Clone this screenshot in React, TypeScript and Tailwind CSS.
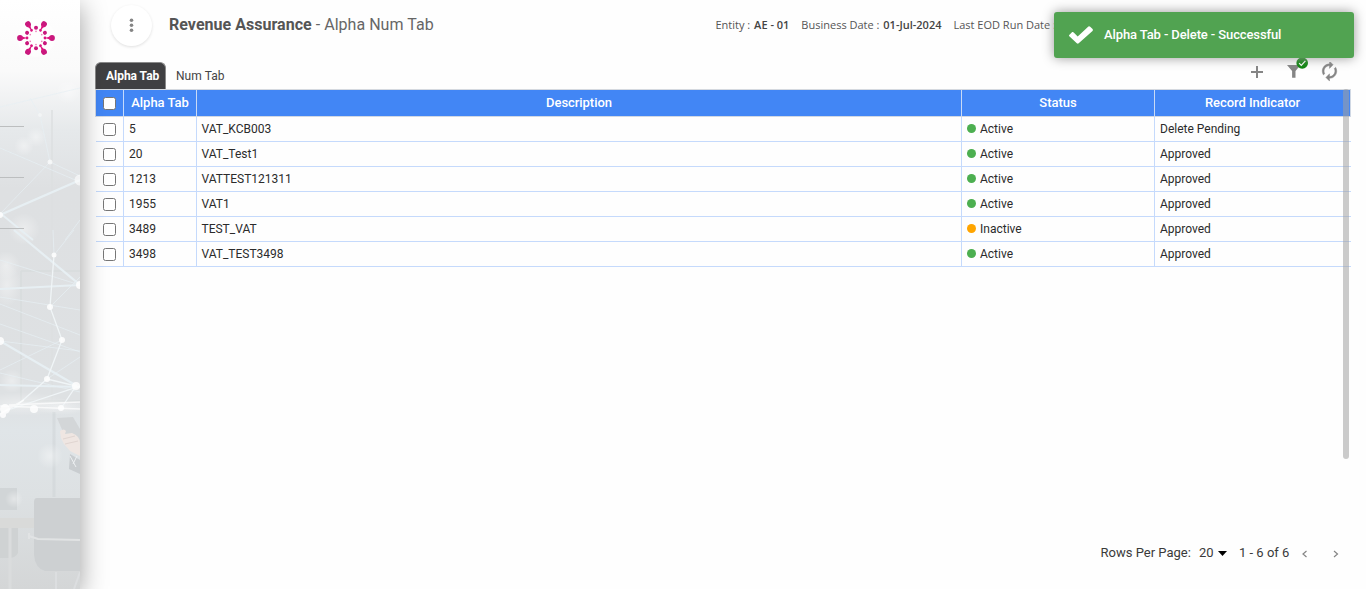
import React from "react";

type Row = { id: string; description: string; status: "Active" | "Inactive"; indicator: string };

const rows: Row[] = [
  { id: "5", description: "VAT_KCB003", status: "Active", indicator: "Delete Pending" },
  { id: "20", description: "VAT_Test1", status: "Active", indicator: "Approved" },
  { id: "1213", description: "VATTEST121311", status: "Active", indicator: "Approved" },
  { id: "1955", description: "VAT1", status: "Active", indicator: "Approved" },
  { id: "3489", description: "TEST_VAT", status: "Inactive", indicator: "Approved" },
  { id: "3498", description: "VAT_TEST3498", status: "Active", indicator: "Approved" },
];

const columns = "grid grid-cols-[28px_73px_765px_193px_195px]";

function Logo() {
  const spokes = [0, 60, 120, 180, 240, 300];
  return (
    <svg className="ml-[16px] mt-[18px] h-10 w-10 shrink-0" viewBox="-20 -20 40 40" fill="#dc1480">
      <circle r="19" fill="#fff" opacity="0.6" />
      {spokes.map((a) => (
        <g key={a} transform={`rotate(${a})`}>
          <circle cx="16" r="2.9" fill="#c9187d" />
          <path d="M14.5 -1.7L10 -0.3V0.3L14.5 1.7Z" />
          <circle cx="9" r="1.4" />
        </g>
      ))}
      {spokes.map((a) => (
        <g key={a} transform={`rotate(${a + 30})`}>
          <circle cx="10.3" r="2" fill="#c9187d" />
          <circle cx="6.6" r="0.8" opacity="0.55" />
        </g>
      ))}
    </svg>
  );
}

function Backdrop() {
  return (
    <svg className="absolute inset-0 h-full w-full" viewBox="0 0 80 589" preserveAspectRatio="none">
      <defs>
        <linearGradient id="base" x1="0" y1="0" x2="0" y2="1">
          <stop offset="0" stopColor="#fff" />
          <stop offset="0.12" stopColor="#fafafa" />
          <stop offset="0.22" stopColor="#e6e9eb" />
          <stop offset="0.32" stopColor="#dee0e2" />
          <stop offset="0.68" stopColor="#dee1e3" />
          <stop offset="0.73" stopColor="#e0e5e8" />
          <stop offset="0.84" stopColor="#dde1e3" />
          <stop offset="1" stopColor="#d4d6d7" />
        </linearGradient>
        <radialGradient id="glow">
          <stop offset="0" stopColor="#fff" stopOpacity="0.4" />
          <stop offset="1" stopColor="#fff" stopOpacity="0" />
        </radialGradient>
      </defs>
      <rect width="80" height="589" fill="url(#base)" />
      <path d="M21 271H80M21 271V401H80" fill="none" stroke="#d8dbdd" strokeWidth="1.5" />
      <path d="M52 110V400" stroke="#dcdfe1" strokeWidth="1.5" />
      <path d="M54 412V497" stroke="#cfd4d7" strokeWidth="3" opacity="0.5" />
      <g fill="url(#glow)">
        <circle cx="68" cy="92" r="12" />
        <circle cx="36" cy="137" r="10" />
        <circle cx="24" cy="146" r="10" />
        <circle cx="6" cy="265" r="14" />
        <ellipse cx="7" cy="285" rx="14" ry="22" />
        <circle cx="24" cy="229" r="16" />
        <circle cx="12" cy="381" r="12" />
        <circle cx="50" cy="456" r="13" />
        <ellipse cx="22" cy="404" rx="48" ry="12" />
        <ellipse cx="62" cy="407" rx="28" ry="8" />
      </g>
      <g stroke="#e7eff3" fill="none">
        <path d="M0 215L80 180M14 230L80 285M0 341L77 386" strokeWidth="2.2" />
        <path d="M0 213L33 240M0 289L80 285M0 385L80 387" strokeWidth="1.8" />
        <path d="M0 297L80 310M0 304L80 335M0 324L80 352M0 370L62 340M0 341L80 351M0 373L80 392M47 379L80 357M50 307L80 277M54 255L74 230M54 255L53 230M0 214L50 162L40 115L30 98M50 162L80 176M65 240L80 220M0 260L80 285M0 107L80 88M0 148L80 182" strokeWidth="0.7" />
        <path d="M54 255L50 307L62 340L47 379L14 408M47 379L76 386L62 407M5 411L80 386" strokeWidth="1.3" stroke="#f0f5f7" />
      </g>
      <path d="M0 406L80 409M0 414L24 400M9 405L80 402" stroke="#fff" strokeWidth="1.6" opacity="0.7" />
      <g fill="#fff" opacity="0.85">
        <circle cx="80" cy="180" r="5.5" opacity="0.7" />
        <circle cx="0" cy="215" r="3" />
        <circle cx="50" cy="162" r="2.5" opacity="0.8" />
        <circle cx="40" cy="115" r="2" opacity="0.5" />
        <circle cx="54" cy="255" r="2.5" />
        <circle cx="80" cy="285" r="4" />
        <circle cx="50" cy="307" r="3" />
        <circle cx="62" cy="340" r="3" />
        <circle cx="0" cy="341" r="4" />
        <circle cx="47" cy="379" r="3" />
        <circle cx="76" cy="386" r="4" />
        <circle cx="5" cy="409" r="5" />
        <circle cx="3" cy="415" r="3" />
        <circle cx="34" cy="409" r="4" />
        <circle cx="61" cy="408" r="3" />
      </g>
      <path d="M57 418L73 417L80 429V454L70 448Z" fill="#d3d6d8" />
      <path d="M60 431Q64 428 66 431L65 434L72 433Q80 436 80 443V456L70 451L64 444L61 438Z" fill="#efe6e2" />
      <path d="M63 439L75 436M65 444L78 441" stroke="#e0d5d1" />
      <path d="M70 454L80 460V474L69 469Z" fill="#c9cdd0" />
      <path d="M70 456L76 467M77 456L73 464" stroke="#edf0f2" />
      <path d="M0 488H17V510H0Z" fill="#d1d5d7" />
      <path d="M0 518H34V528H0Z" fill="#d9dad9" />
      <path d="M0 528H18V553Q16 558 8 558H0Z" fill="#cfd2d3" />
      <path d="M10 528V589" stroke="#dadcdd" strokeWidth="3" />
      <path d="M37 498H80V571H45Q35 568 34 555V502Q34 498 37 498Z" fill="#cdd0d2" />
      <path d="M29 533V539M29 536L38 539L80 540" fill="none" stroke="#e1e3e4" strokeWidth="2" />
      <path d="M56 572V589M80 572L74 589" stroke="#dcdee0" strokeWidth="2" />
      <circle cx="14" cy="499" r="9" fill="url(#glow)" />
    </svg>
  );
}

function Sidebar() {
  return (
    <aside className="relative z-10 flex h-full w-20 shrink-0 flex-col shadow-[0_6px_25px_rgba(0,0,0,0.38)]">
      <Backdrop />
      <div className="relative flex flex-col">
        <Logo />
        <div className="mt-[68px] flex w-6 flex-col gap-[50px]">
          <div className="h-px bg-[#bcbebf]" />
          <div className="h-px bg-[#bcbebf]" />
          <div className="h-px bg-[#bcbebf]" />
        </div>
      </div>
    </aside>
  );
}

function Meta({ label, value }: { label: string; value: string }) {
  return (
    <span className="whitespace-nowrap">
      {label} : <span className="ml-px font-semibold text-[#444]">{value}</span>
    </span>
  );
}

function Header() {
  return (
    <header className="flex h-[62px] shrink-0 pl-[31px]">
      <button className="mt-[5px] flex h-[41px] w-[41px] items-center justify-center rounded-full bg-white shadow-[0_1px_3px_rgba(0,0,0,0.12)]">
        <svg className="h-4 w-4" viewBox="0 0 16 16" fill="#858585">
          <circle cx="7.5" cy="2.3" r="1.8" />
          <circle cx="7.5" cy="7.3" r="1.8" />
          <circle cx="7.5" cy="12.3" r="1.8" />
        </svg>
      </button>
      <h1 className="ml-[17px] mt-[13px] w-[546.5px] whitespace-nowrap text-[16px] leading-[24px] tracking-[0.03px] text-[#666]">
        <span className="font-bold text-[#555]">Revenue Assurance</span> - Alpha Num Tab
      </h1>
      <div className="mt-[17px] flex h-4 gap-3 font-['Open_Sans',sans-serif] text-[11px] leading-4 text-[#555]">
        <Meta label="Entity" value="AE - 01" />
        <Meta label="Business Date" value="01-Jul-2024" />
        <Meta label="Last EOD Run Date" value="30-Jun-2024" />
      </div>
    </header>
  );
}

function Tools() {
  return (
    <div className="ml-auto mr-[27px] flex h-full gap-[18px] text-[#858585]">
      <svg className="-ml-px mr-px h-[18px] w-[18px]" viewBox="0 0 18 18" fill="currentColor">
        <path d="M15 11H10V16H8V11H3V9H8V4H10V9H15z" />
      </svg>
      <svg className="-mt-[6px] h-[26px] w-[26px]" viewBox="0 0 26 26">
        <path d="M2 9h13.5l-5 6.1v6.7H7.1v-6.7z" fill="#858585" />
        <circle cx="17.2" cy="7" r="5.8" fill="#0c850c" />
        <path d="M14.1 7.1l2.2 2.3 4.1-4.5" fill="none" stroke="#fff" strokeWidth="1.3" />
      </svg>
      <svg className="-ml-[9px] h-[20px] w-[19px]" viewBox="1.5 2 21 22" fill="currentColor" stroke="currentColor" strokeWidth="0.5">
        <path d="M12 6v3l4-4-4-4v3c-4.42 0-8 3.58-8 8 0 1.57.46 3.03 1.24 4.26L6.7 14.8c-.45-.83-.7-1.79-.7-2.8 0-3.31 2.69-6 6-6zm6.76 1.74L17.3 9.2c.44.84.7 1.79.7 2.8 0 3.31-2.69 6-6 6v-3l-4 4 4 4v-3c4.42 0 8-3.58 8-8 0-1.57-.46-3.03-1.24-4.26z" />
      </svg>
    </div>
  );
}

function Tabs() {
  return (
    <div className="flex h-[27px] shrink-0 pl-[15px] text-[12px] leading-[28px]">
      <div className="w-[71px] whitespace-nowrap rounded-t-[6px] border border-b-0 border-[#8a8a8a] bg-[#404042] pl-[10px] font-bold leading-[26px] tracking-[-0.03px] text-white">
        Alpha Tab
      </div>
      <div className="ml-[10px] whitespace-nowrap tracking-[0.05px] text-[#444]">Num Tab</div>
      <Tools />
    </div>
  );
}

function Checkbox() {
  return (
    <span className="flex items-center justify-center border-r border-[#c5dafc]">
      <span className="mt-px h-[13px] w-[13px] rounded-[2.5px] border border-[#767676] bg-white" />
    </span>
  );
}

function Table() {
  return (
    <div className="ml-[15px] w-[1256px] border-t border-[#d5d9df]">
      <div className={`${columns} h-[27px] border-x border-b border-[#d0d8e4] bg-[#4286f5] text-center text-[13px] font-medium leading-[25px] text-white`}>
        <Checkbox />
        <span className="border-r border-[#c9daf5] tracking-[-0.03px]">Alpha Tab</span>
        <span className="border-r border-[#c9daf5] tracking-[-0.05px]">Description</span>
        <span className="border-r border-[#c9daf5]">Status</span>
        <span className="tracking-[-0.05px]">Record Indicator</span>
      </div>
      {rows.map((row) => (
        <div key={row.id} className={`${columns} ml-px h-[25px] border-b border-[#c5dafc] text-[12px] leading-[24px] text-[#2b2b2b]`}>
          <Checkbox />
          <span className="border-r border-[#c5dafc] pl-[5px]">{row.id}</span>
          <span className="border-r border-[#c5dafc] pl-[4.5px]">{row.description}</span>
          <span className="flex items-center gap-1 border-r border-[#c5dafc] pl-[5px]">
            <span className={`-mt-px h-[9px] w-[9px] rounded-full ${row.status === "Active" ? "bg-[#4caf50]" : "bg-[#ffa500]"}`} />
            {row.status}
          </span>
          <span className="pl-[5px]">{row.indicator}</span>
        </div>
      ))}
    </div>
  );
}

function Pager() {
  return (
    <footer className="mt-auto mb-[26px] flex h-5 items-center pl-[1020.5px] text-[13px] leading-5 text-[#3a3a3a]">
      <span className="w-[98.5px] whitespace-nowrap">Rows Per Page:</span>
      <span className="w-[19px]">20</span>
      <svg className="h-[5px] w-[9px]" viewBox="0 0 9 5">
        <path d="M0 0H9L4.5 5Z" fill="#000" />
      </svg>
      <span className="ml-[12px] w-[62px] whitespace-nowrap">1 - 6 of 6</span>
      <svg className="mt-px h-2 w-2" viewBox="0 0 8 8" fill="none" stroke="#858585" strokeWidth="1.2">
        <path d="M5.5 1L2 4L5.5 7" />
      </svg>
      <svg className="ml-[23px] mt-px h-2 w-2" viewBox="0 0 8 8" fill="none" stroke="#858585" strokeWidth="1.2">
        <path d="M2 1L5.5 4L2 7" />
      </svg>
    </footer>
  );
}

function Toast() {
  return (
    <div className="absolute right-[12px] top-[12px] z-20 flex h-[46px] w-[300px] items-center rounded-[3px] bg-[#51a351] pl-[15px] text-[13px] font-medium tracking-[-0.11px] text-white shadow-[0_0_12px_#999]">
      <svg className="h-[18px] w-6" viewBox="0 0 24 18" fill="#fff">
        <path d="M0 9.3L3.2 6.1Q4 5.7 4.7 6.4L8.7 10.4L19.4 0.5Q20.3 0 21.2 0.7L23.6 3.1Q24.2 4 23.5 4.9L9.7 17.3Q8.8 18 7.8 17.2L0.3 10.2Q0 9.8 0 9.3Z" />
      </svg>
      <span className="ml-[11px] whitespace-nowrap">Alpha Tab - Delete - Successful</span>
    </div>
  );
}

export default function App() {
  return (
    <div className="relative flex h-[589px] w-[1366px] overflow-hidden bg-white font-[Roboto,sans-serif]">
      <Sidebar />
      <main className="relative flex min-w-0 flex-1 flex-col bg-[#fefefe]">
        <Header />
        <Tabs />
        <Table />
        <Pager />
        <div className="absolute left-[1263px] top-[89px] h-[370px] w-[6px] rounded-[3px] bg-[#a0a0a0]/55" />
      </main>
      <Toast />
    </div>
  );
}
